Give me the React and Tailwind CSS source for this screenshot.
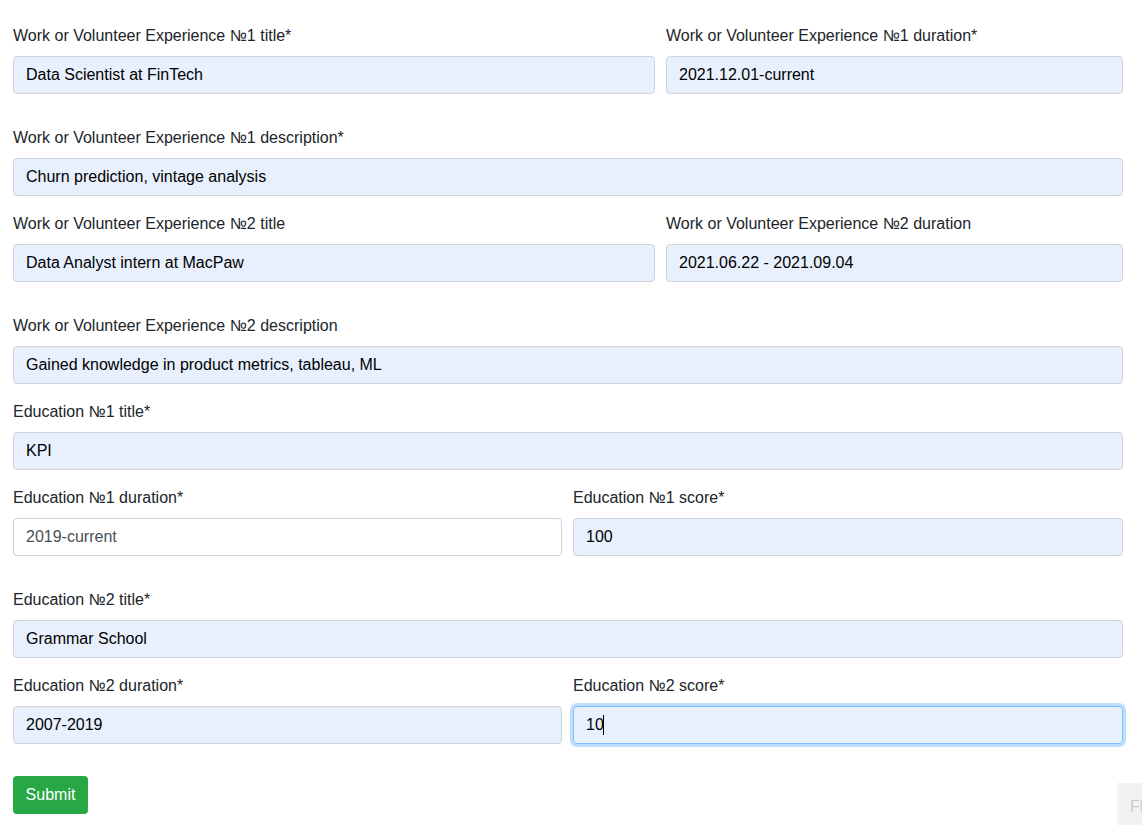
import React from 'react';

const font = { fontFamily: '"Liberation Sans", Arial, sans-serif' };

function Field({ label, value, autofill = true, focused = false }) {
    const base = 'block w-full h-[38px] px-3 rounded border text-base outline-none';
    let cls = base;
    if (focused) {
        cls += ' bg-[#e8f0fe] border-[#80bdff] text-black shadow-[0_0_0_3px_rgba(0,123,255,0.25)]';
    } else if (autofill) {
        cls += ' bg-[#e8f0fe] border-[#ced4da] text-black';
    } else {
        cls += ' bg-white border-[#ced4da] text-[#495057]';
    }
    return (
        <div>
            <label className="block mb-2 leading-6 text-base text-[#212529]">{label}</label>
            <div className="relative">
                <input className={cls} style={font} defaultValue={value} readOnly />
                {focused && (
                    <span className="absolute left-[30px] top-[9px] w-px h-[20px] bg-black"></span>
                )}
            </div>
        </div>
    );
}

export default function App() {
    return (
        <div className="relative min-h-[825px] bg-white pt-6 pl-[13px] pr-[19px]" style={font}>
            <form onSubmit={(e) => e.preventDefault()}>
                {/* Experience 1 */}
                <div className="grid grid-cols-[642px_1fr] gap-[11px] mb-8">
                    <Field label="Work or Volunteer Experience №1 title*" value="Data Scientist at FinTech" />
                    <Field label="Work or Volunteer Experience №1 duration*" value="2021.12.01-current" />
                </div>
                <div className="mb-4">
                    <Field label="Work or Volunteer Experience №1 description*" value="Churn prediction, vintage analysis" />
                </div>

                {/* Experience 2 */}
                <div className="grid grid-cols-[642px_1fr] gap-[11px] mb-8">
                    <Field label="Work or Volunteer Experience №2 title" value="Data Analyst intern at MacPaw" />
                    <Field label="Work or Volunteer Experience №2 duration" value="2021.06.22 - 2021.09.04" />
                </div>
                <div className="mb-4">
                    <Field label="Work or Volunteer Experience №2 description" value="Gained knowledge in product metrics, tableau, ML" />
                </div>

                {/* Education 1 */}
                <div className="mb-4">
                    <Field label="Education №1 title*" value="KPI" />
                </div>
                <div className="grid grid-cols-[549px_1fr] gap-[11px] mb-8">
                    <Field label="Education №1 duration*" value="2019-current" autofill={false} />
                    <Field label="Education №1 score*" value="100" />
                </div>

                {/* Education 2 */}
                <div className="mb-4">
                    <Field label="Education №2 title*" value="Grammar School" />
                </div>
                <div className="grid grid-cols-[549px_1fr] gap-[11px] mb-8">
                    <Field label="Education №2 duration*" value="2007-2019" />
                    <Field label="Education №2 score*" value="10" focused />
                </div>

                <button type="submit" className="w-[75px] h-[38px] rounded bg-[#28a745] text-white text-base text-center" style={font}>
                    Submit
                </button>
            </form>

            {/* corner badge, cut off at the window edge */}
            <div className="fixed right-0 bottom-0 w-[25px] h-[42px] bg-[#f2f2f2] overflow-hidden">
                <span className="block pl-[13px] pt-[14px] text-base leading-5 text-[#cccccc] whitespace-nowrap">Fl</span>
            </div>
        </div>
    );
}
